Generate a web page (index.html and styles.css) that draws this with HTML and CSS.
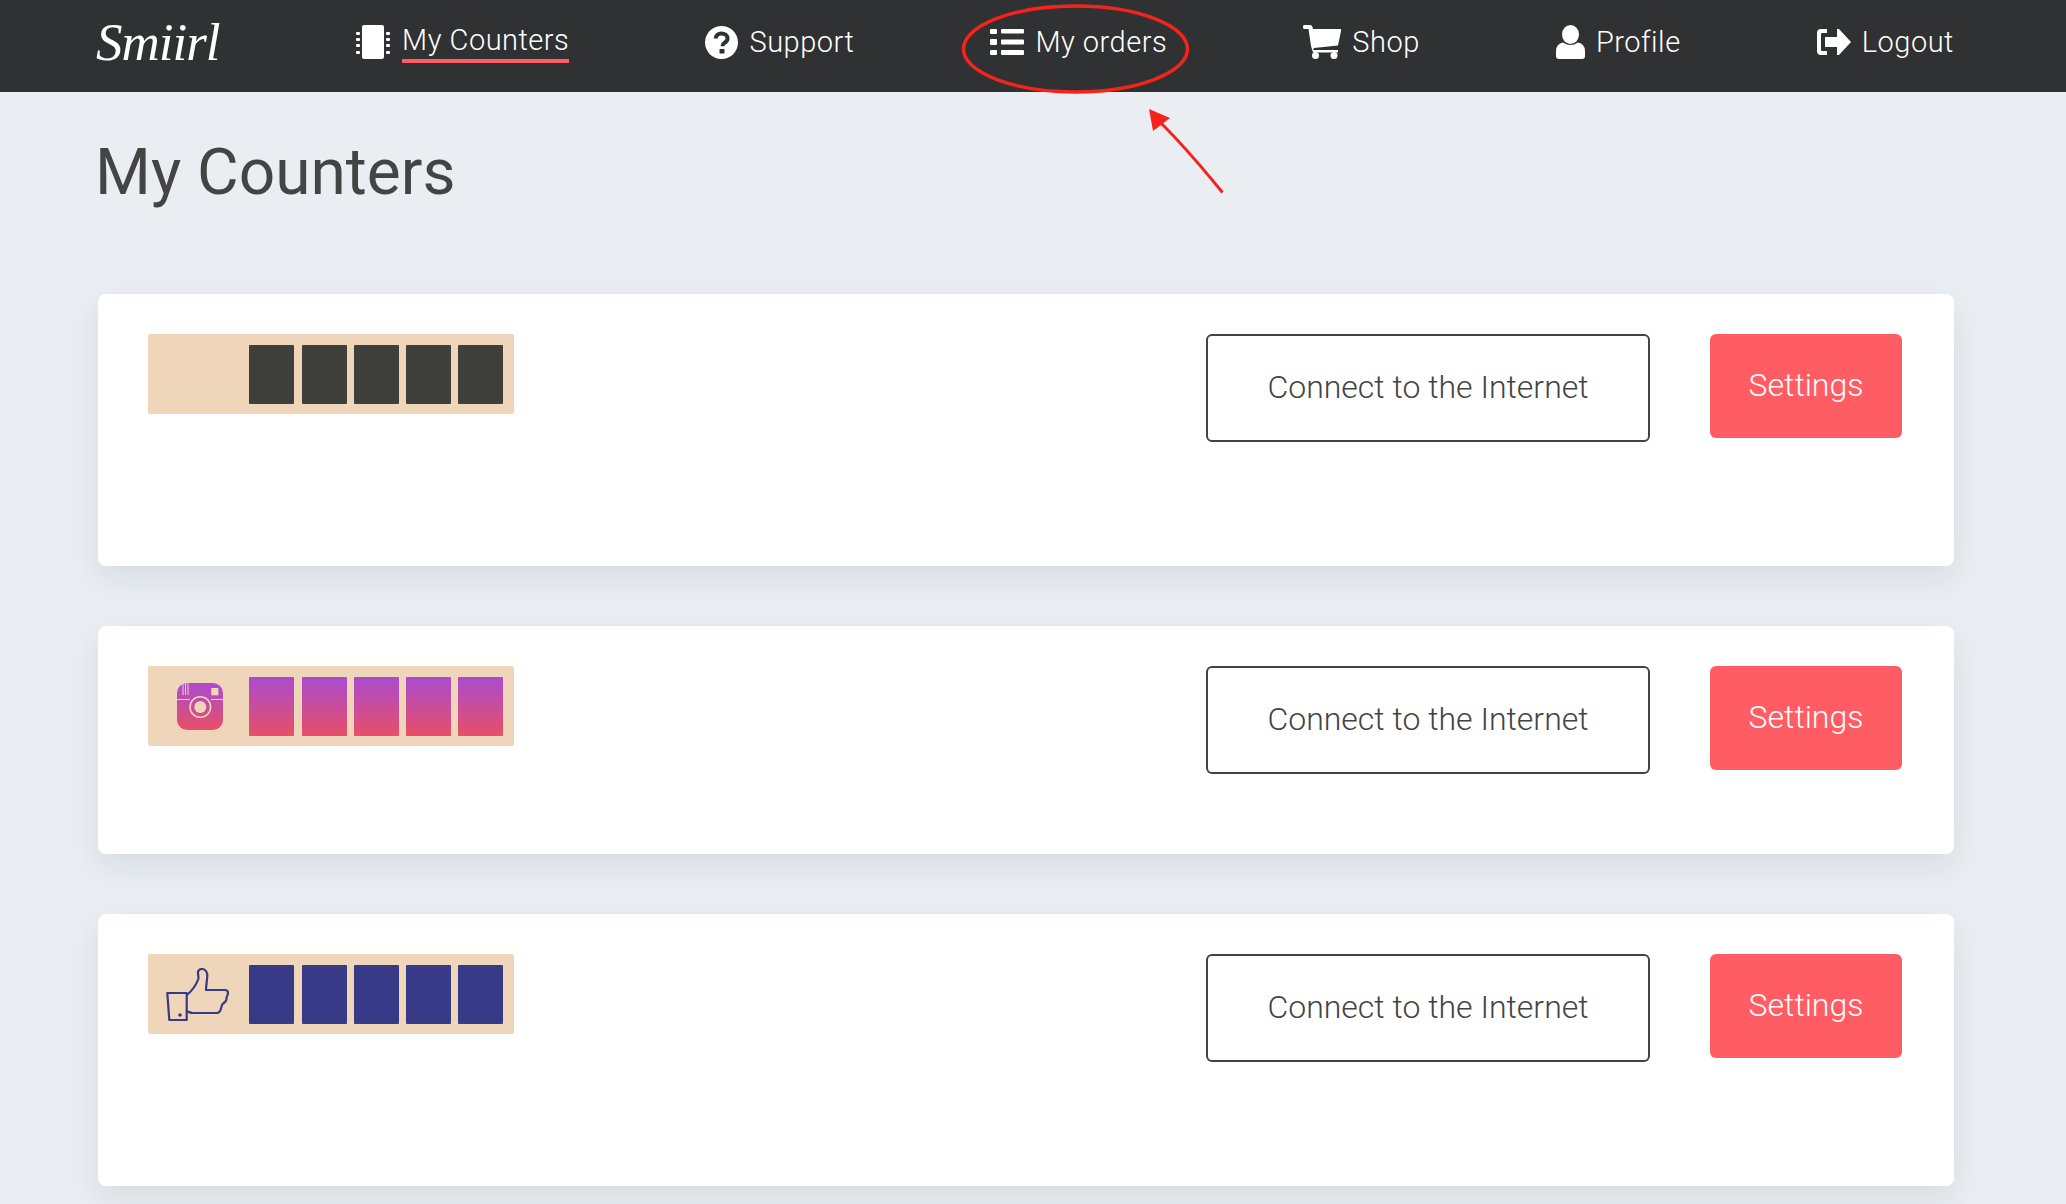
FILE: index.html
```html
<!DOCTYPE html>
<html lang="en">
<head>
  <meta charset="UTF-8" />
  <title>My Counters</title>
  <link rel="stylesheet" href="styles.css">
</head>
<body>
  <header class="navbar">
    <a class="logo">Smiirl</a>

    <a class="nav-item active">
      <svg class="nav-icon" width="35" height="34" viewBox="0 0 35 34">
        <rect x="6" y="0" width="22" height="34" rx="2" fill="#fff"/>
        <g fill="#fff">
          <rect x="0" y="7" width="4" height="3" rx="1"/><rect x="0" y="13" width="4" height="3" rx="1"/>
          <rect x="0" y="19" width="4" height="3" rx="1"/><rect x="0" y="26" width="4" height="3" rx="1"/>
          <rect x="30" y="7" width="4" height="3" rx="1"/><rect x="30" y="13" width="4" height="3" rx="1"/>
          <rect x="30" y="19" width="4" height="3" rx="1"/><rect x="30" y="26" width="4" height="3" rx="1"/>
        </g>
      </svg>
      <span class="nav-label">My Counters</span>
    </a>

    <a class="nav-item">
      <svg class="nav-icon" width="33" height="33" viewBox="0 0 33 33">
        <circle cx="16.5" cy="16.5" r="16.5" fill="#fff"/>
        <path d="M10.5 12.5c.6-3.4 3-5 6-5 3.400 0 6 2 6 4.900 0 2.300-1.300 3.300-2.900 4.400-1.400.9-2.100 1.600-2.100 3.400" fill="none" stroke="#303133" stroke-width="4"/>
        <rect x="14.500" y="23" width="5" height="4.500" rx=".5" fill="#303133"/>
      </svg>
      <span class="nav-label">Support</span>
    </a>

    <a class="nav-item">
      <svg class="nav-icon" width="34" height="26" viewBox="0 0 34 26">
        <g fill="#fff">
          <rect x="0" y="0" width="7" height="5" rx="1"/><rect x="11" y="0" width="23" height="4.500" rx="1"/>
          <rect x="0" y="10" width="7" height="6" rx="1"/><rect x="11" y="10.500" width="23" height="5" rx="1"/>
          <rect x="0" y="21" width="7" height="5" rx="1"/><rect x="11" y="21" width="23" height="5" rx="1"/>
        </g>
      </svg>
      <span class="nav-label">My orders</span>
    </a>

    <a class="nav-item">
      <svg class="nav-icon" width="38" height="34" viewBox="0 0 38 34">
        <g fill="#fff">
          <path d="M1 0h6q2 0 2.500 2l.5 2h28v2l-3 14.500-24 2.500-1 2h25v2.500H10L8 21 5.500 4H1q-1 0-1-2t1-2z"/>
          <circle cx="12.500" cy="30.500" r="3.500"/>
          <circle cx="31" cy="30.500" r="3.500"/>
        </g>
      </svg>
      <span class="nav-label">Shop</span>
    </a>

    <a class="nav-item">
      <svg class="nav-icon" width="29" height="34" viewBox="0 0 29 34">
        <g fill="#fff">
          <ellipse cx="14.500" cy="9.500" rx="8.500" ry="9.500"/>
          <path d="M0 31v-5q0-7 7-8.500 7.500 5 15 0 7 1.500 7 8.500v5q0 3-3 3H3q-3 0-3-3z"/>
        </g>
      </svg>
      <span class="nav-label">Profile</span>
    </a>

    <a class="nav-item">
      <svg class="nav-icon" width="34" height="26" viewBox="0 0 34 26">
        <g fill="#fff">
          <path d="M10 0H4Q0 0 0 4v18q0 4 4 4h6v-4H5q-1 0-1-1V5q0-1 1-1h5z"/>
          <path d="M8 8h12V0h2l12 13-12 13h-2v-8H8z"/>
        </g>
      </svg>
      <span class="nav-label">Logout</span>
    </a>
  </header>

  <main class="page">
    <h1 class="page-title">My Counters</h1>

    <section class="card">
      <div class="counter">
        <div class="counter-icon"></div>
        <div class="digit digit-dark"></div>
        <div class="digit digit-dark"></div>
        <div class="digit digit-dark"></div>
        <div class="digit digit-dark"></div>
        <div class="digit digit-dark"></div>
      </div>
      <a class="btn btn-outline">Connect to the Internet</a>
      <a class="btn btn-primary">Settings</a>
    </section>

    <section class="card card-short">
      <div class="counter">
        <div class="counter-icon">
          <svg class="icon-insta" width="46" height="47" viewBox="0 0 46 47">
            <defs>
              <linearGradient id="instaFill" x1="0" y1="0" x2="0" y2="1">
                <stop offset="0" stop-color="#ab4bd0"/>
                <stop offset="1" stop-color="#e74f65"/>
              </linearGradient>
            </defs>
            <rect width="46" height="47" rx="10" fill="url(#instaFill)"/>
            <path d="M0 16.500h13M34 16.500h12" stroke="#efd6bb" stroke-width="1"/>
            <path d="M6 0v12M8.500 0v12M11 0v12" stroke="#efd6bb" stroke-width="1"/>
            <rect x="34.300" y="5" width="7" height="7.300" fill="#efd6bb"/>
            <circle cx="23.300" cy="24" r="10.300" fill="none" stroke="#efd6bb" stroke-width="1.600"/>
            <circle cx="23.300" cy="24" r="6" fill="#efd6bb"/>
          </svg>
        </div>
        <div class="digit digit-insta"></div>
        <div class="digit digit-insta"></div>
        <div class="digit digit-insta"></div>
        <div class="digit digit-insta"></div>
        <div class="digit digit-insta"></div>
      </div>
      <a class="btn btn-outline">Connect to the Internet</a>
      <a class="btn btn-primary">Settings</a>
    </section>

    <section class="card">
      <div class="counter">
        <div class="counter-icon">
          <svg class="icon-thumb" width="63" height="54" viewBox="0 0 63 54">
            <g fill="none" stroke="#373a87" stroke-width="2.200" stroke-linejoin="round" stroke-linecap="round">
              <path d="M1.300 25h19.400v27H3.300z"/>
              <path d="M21 27c4-3.500 9-9.500 11.300-16 .6-2-.6-4-.3-7 .3-2 2.500-3 4-3 3 0 5.300 3 5.300 6 0 5-1.300 10-1.300 15h19c2 0 3 1.500 3 3 0 2.500-1.500 3-1.400 4.500.1 1.500-.7 3.500-1.600 4.500-.8 1-2.500 1.500-3 3-.5 1.500-1 4.500-2 6.200-1 1.500-1.800 1.800-3 1.800H27c-2.300 0-4-1-6-1.700"/>
            </g>
            <circle cx="14" cy="47" r="1.800" fill="#373a87"/>
          </svg>
        </div>
        <div class="digit digit-blue"></div>
        <div class="digit digit-blue"></div>
        <div class="digit digit-blue"></div>
        <div class="digit digit-blue"></div>
        <div class="digit digit-blue"></div>
      </div>
      <a class="btn btn-outline">Connect to the Internet</a>
      <a class="btn btn-primary">Settings</a>
    </section>
  </main>

  <!-- red markup drawn on top of the screenshot -->
  <svg class="annotation" width="2066" height="220" viewBox="0 0 2066 220">
    <ellipse cx="1075.500" cy="49" rx="112" ry="43" fill="none" stroke="#f5231b" stroke-width="3.500"/>
    <path d="M1222.500 192.500 Q1188 150 1160 122" fill="none" stroke="#f5231b" stroke-width="3"/>
    <path d="M1149 109 1170 118 1153 131z" fill="#f5231b"/>
  </svg>
</body>
</html>
```

FILE: styles.css
```css
* {
  box-sizing: border-box;
}
body {
  margin: 0;
  background-color: #eaeef3;
  font-family: Roboto, "Liberation Sans", sans-serif;
  color: #444;
}
.navbar {
  display: flex;
  justify-content: space-between;
  align-items: center;
  height: 92px;
  padding: 0 112px 8px 96px;
  background-color: #303133;
}
.logo {
  width: 124px;
  font-family: "Liberation Serif", serif;
  font-style: italic;
  font-size: 53px;
  line-height: 58px;
  letter-spacing: -1px;
  color: #fff;
  white-space: nowrap;
}
.nav-item {
  display: flex;
  align-items: center;
  gap: 11px;
  color: #fff;
  font-size: 29px;
  font-weight: 300;
  letter-spacing: 0.5px;
}
.nav-icon {
  flex: none;
}
.nav-label {
  line-height: 34px;
}
.nav-item.active .nav-label {
  padding-bottom: 2px;
  border-bottom: 4px solid #ff5c64;
  margin-top: 2px;
}
.page {
  padding: 43px 112px 18px 98px;
}
.page-title {
  margin: 0 0 83px -3px;
  font-size: 64px;
  font-weight: 400;
  line-height: 76px;
}
.card {
  display: flex;
  align-items: flex-start;
  height: 272px;
  margin-bottom: 60px;
  padding: 40px 52px 40px 50px;
  background-color: #fff;
  border-radius: 8px;
  box-shadow: 0 12px 30px rgba(90, 110, 130, 0.14);
}
.card:last-child {
  margin-bottom: 0;
}
.card-short {
  height: 228px;
}
.counter {
  display: flex;
  gap: 7.250px;
  width: 366px;
  height: 80px;
  padding: 11px 0 10px;
  background-color: #efd6bb;
  border-radius: 2px;
}
.counter-icon {
  display: flex;
  align-items: center;
  justify-content: center;
  width: 95px;
  margin-right: -1px;
}
.icon-insta {
  margin-left: 9px;
}
.icon-thumb {
  margin-left: 4px;
}
.digit {
  width: 45px;
  height: 59px;
  border-radius: 1px;
}
.digit-dark {
  background-color: #3e3e3b;
}
.digit-insta {
  background: linear-gradient(#ab4bd0, #e74f65);
}
.digit-blue {
  background-color: #373a87;
}
.btn {
  display: flex;
  align-items: center;
  justify-content: center;
  padding-bottom: 2px;
  font-size: 32px;
  font-weight: 300;
  border-radius: 6px;
  white-space: nowrap;
}
.btn-outline {
  width: 444px;
  height: 108px;
  margin-left: auto;
  border: 2px solid #444;
  color: #444;
}
.btn-primary {
  width: 192px;
  height: 104px;
  margin-left: 60px;
  background-color: #ff5c64;
  color: #fff;
}
.annotation {
  position: absolute;
  left: 0;
  top: 0;
  pointer-events: none;
}
```
